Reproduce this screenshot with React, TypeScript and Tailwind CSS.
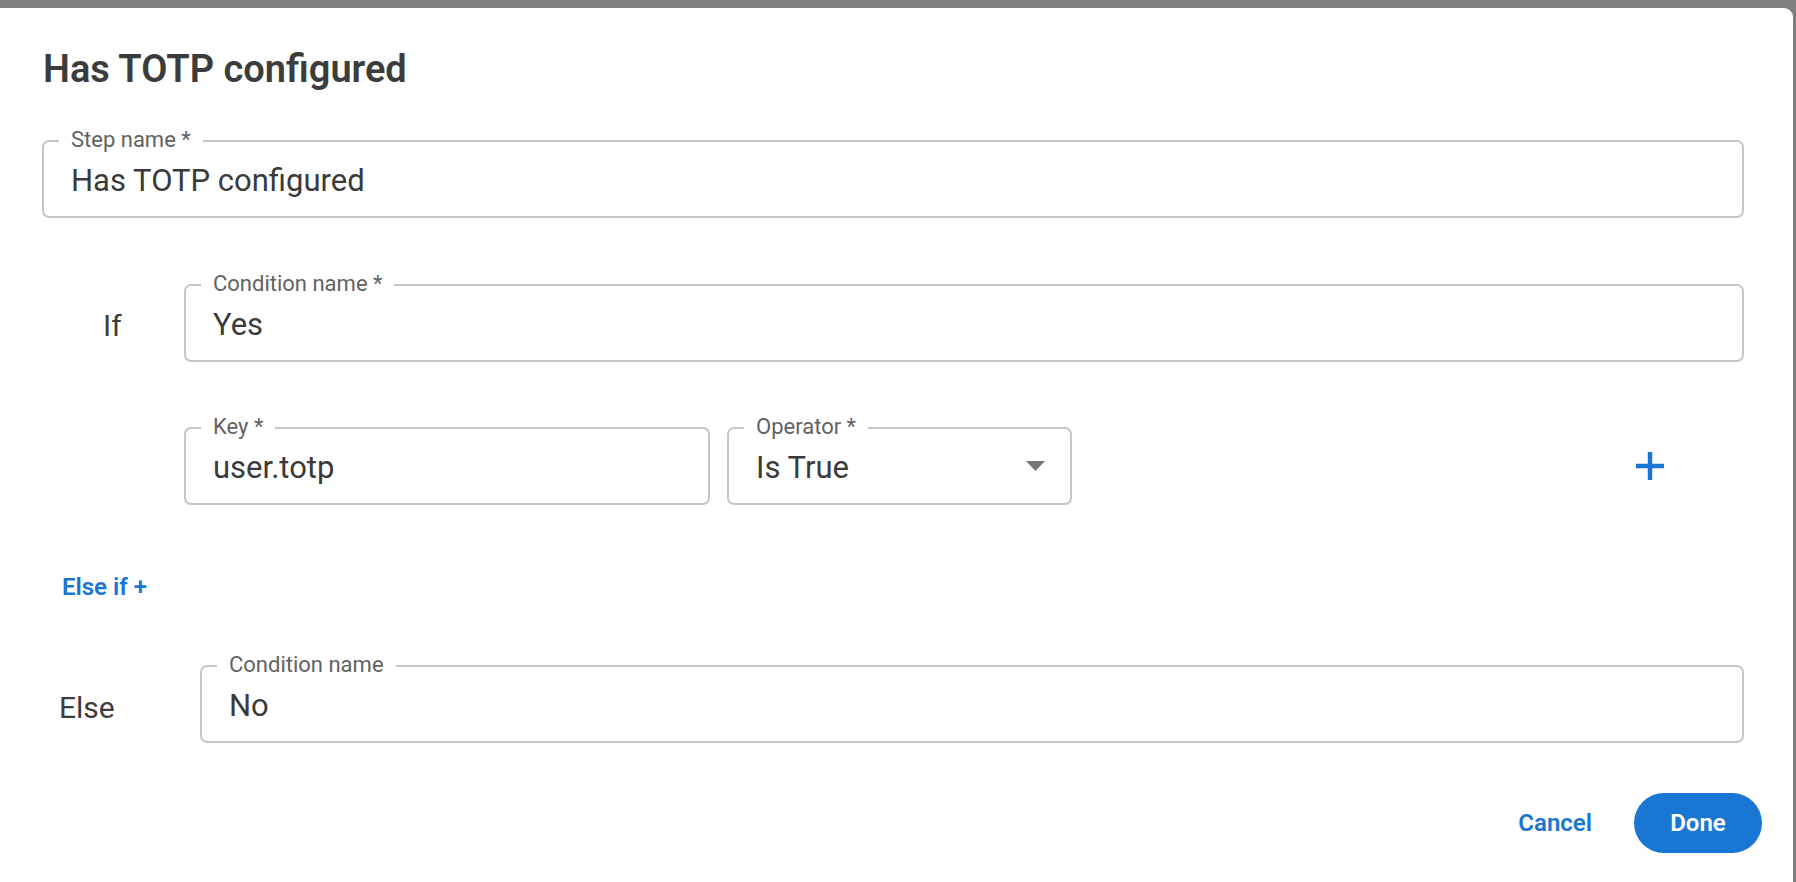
import React from "react";

const font = { fontFamily: "Roboto, 'Noto Sans', sans-serif" };

function Field({
  label,
  value,
  className = "",
  select = false,
}: {
  label: string;
  value: string;
  className?: string;
  select?: boolean;
}) {
  return (
    <div
      className={`relative flex items-center h-[78px] rounded-[7px] border-2 border-[#c6c6c6] pl-[27px] pr-[25px] pt-[4px] ${className}`}
    >
      {/* notched label */}
      <span className="absolute left-[15px] top-[-15px] bg-white px-[12px] text-[22px] leading-[26px] text-[#626262]">
        {label}
      </span>
      <span className="flex-1 text-[31px] leading-[36px] text-[#3a3a3a]">{value}</span>
      {select && (
        <svg width="19" height="10" viewBox="0 0 19 10" className="mt-[-4px]">
          <path d="M0 0h19L9.5 10z" fill="#757575" />
        </svg>
      )}
    </div>
  );
}

export default function App() {
  return (
    <div className="w-[1796px] h-[882px] overflow-hidden bg-[#7f7f7f] pt-[8px] pr-[3px]" style={font}>
      <div className="h-[900px] bg-white rounded-tr-[9px] pl-[42px] pr-[49px] pt-[40px]">
        {/* Title */}
        <h1 className="pl-[1px] text-[38px] leading-[42px] font-semibold text-[#3c3c3c]">Has TOTP configured</h1>

        {/* Step name */}
        <Field label="Step name *" value="Has TOTP configured" className="mt-[50px]" />

        {/* If row */}
        <div className="flex items-center mt-[66px]">
          <div className="w-[142px] shrink-0 pl-[61px] pt-[6px] text-[30px] leading-[36px] text-[#3d3d3d]">If</div>
          <Field label="Condition name *" value="Yes" className="flex-1" />
        </div>

        {/* Key / operator row */}
        <div className="flex items-center mt-[65px] pl-[142px]">
          <Field label="Key *" value="user.totp" className="w-[526px]" />
          <Field label="Operator *" value="Is True" className="w-[345px] ml-[17px]" select />
          <svg width="28" height="28" viewBox="0 0 28 28" className="ml-auto mr-[80px]">
            <rect x="11.75" y="0" width="4.5" height="28" fill="#1976d2" />
            <rect x="0" y="11.75" width="28" height="4.5" fill="#1976d2" />
          </svg>
        </div>

        {/* Else if */}
        <div className="mt-[68px] pl-[20px] text-[24px] leading-[28px] font-semibold text-[#1976d2]">Else if +</div>

        {/* Else row */}
        <div className="flex items-center mt-[64px]">
          <div className="w-[158px] shrink-0 pl-[17px] pt-[8px] text-[30px] leading-[36px] text-[#3d3d3d]">Else</div>
          <Field label="Condition name" value="No" className="flex-1" />
        </div>

        {/* Actions */}
        <div className="flex items-center justify-end mt-[50px] mr-[-18px]">
          <button className="px-[20px] h-[60px] text-[24px] font-semibold text-[#1976d2]">Cancel</button>
          <button className="ml-[22px] w-[128px] h-[60px] rounded-full bg-[#1976d2] text-[24px] font-semibold text-white">
            Done
          </button>
        </div>
      </div>
    </div>
  );
}
